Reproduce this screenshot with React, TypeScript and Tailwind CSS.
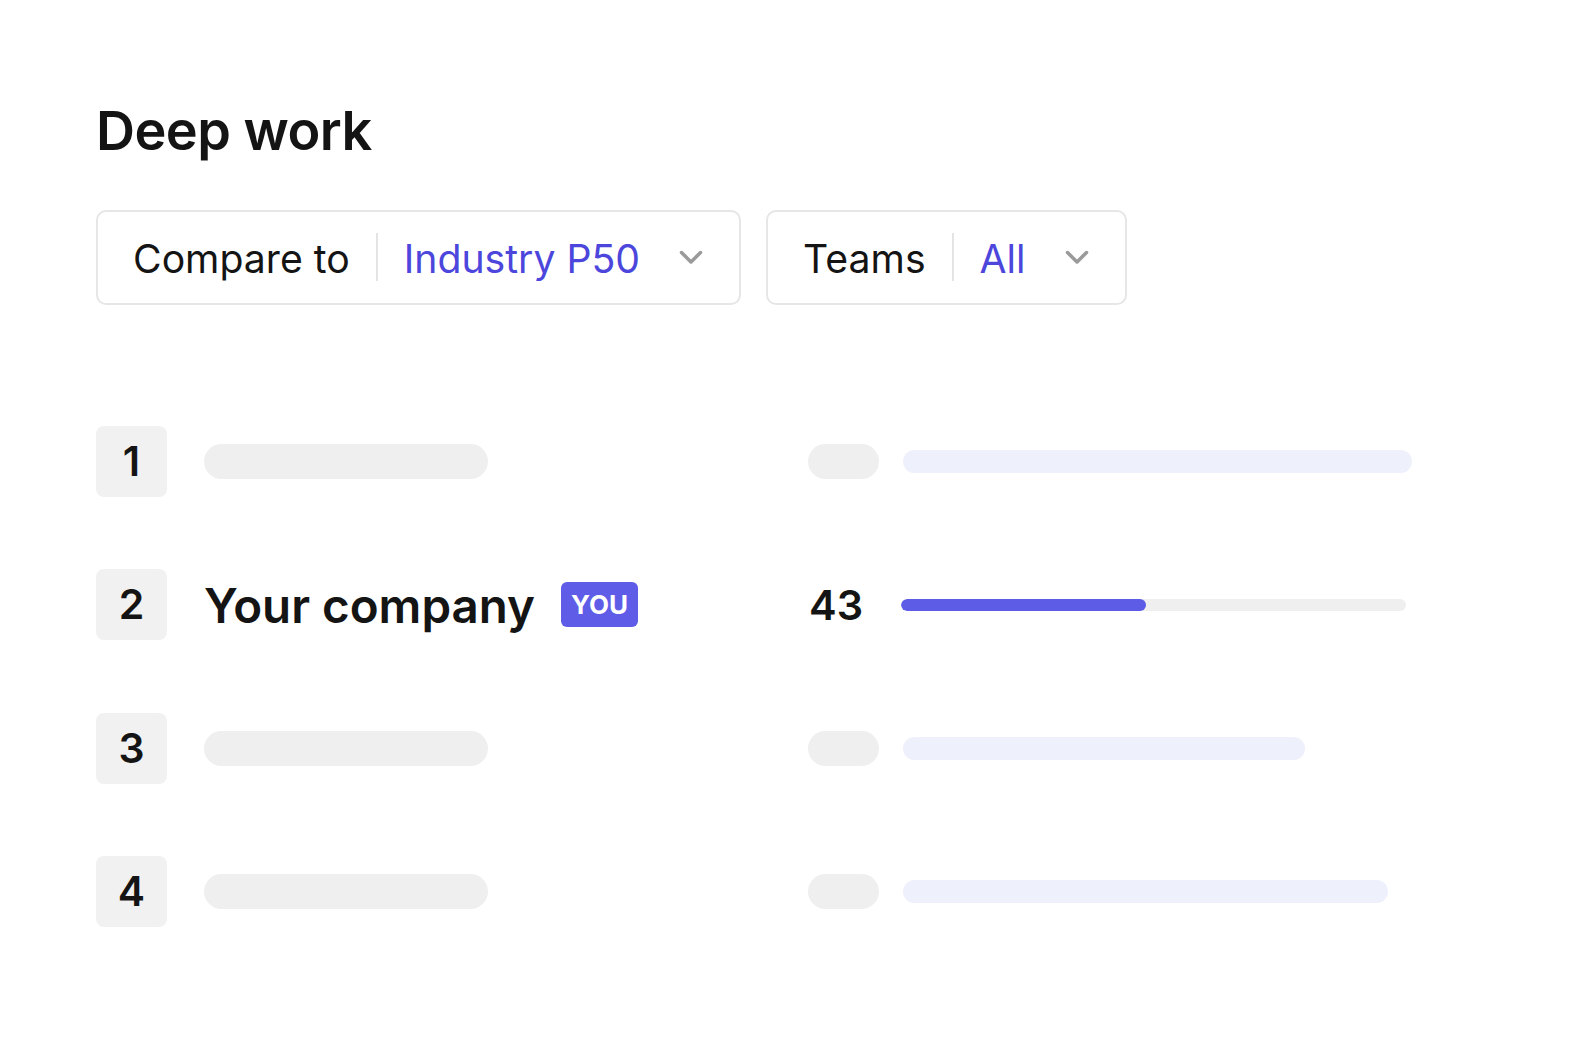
import React from "react"

const font = { fontFamily: "Inter, 'Noto Sans', sans-serif" }

function Chevron() {
  return (
    <svg width="24" height="15" viewBox="0 0 24 15" fill="none" className="shrink-0">
      <polyline points="2.5,2.5 12,12 21.5,2.5" stroke="#9a9a9a" strokeWidth="3.5" strokeLinecap="round" strokeLinejoin="round" />
    </svg>
  )
}

function Select({ label, value }: { label: string; value: string }) {
  return (
    <div className="flex items-center h-[95px] border-2 border-[#e6e6e6] rounded-[10px] pl-[35px] pr-[36px] pt-[3px] bg-white">
      <span className="text-[39.2px] text-[#141414] leading-none">{label}</span>
      <span className="w-[2px] h-[48px] bg-[#e4e4e4] mx-[26px] -mt-[3px]" />
      <span className="text-[39.2px] text-[#4c46dc] leading-none">{value}</span>
      <span className="ml-[39px] -mt-[3px]"><Chevron /></span>
    </div>
  )
}

function RankBox({ n }: { n: number }) {
  return (
    <div className="w-[71px] h-[71px] rounded-[8px] bg-[#f1f1f1] flex items-center justify-center text-[41px] font-semibold text-[#141414] shrink-0">
      {n}
    </div>
  )
}

function SkeletonRow({ n, barWidth }: { n: number; barWidth: number }) {
  return (
    <div className="flex items-center h-[71px]">
      <div className="flex items-center w-[712px] shrink-0">
        <RankBox n={n} />
        <div className="ml-[37px] w-[284px] h-[35px] rounded-full bg-[#efefef]" />
      </div>
      <div className="w-[71px] h-[35px] rounded-full bg-[#efefef]" />
      <div className="ml-[24px] h-[23px] rounded-full bg-[#eef1fc]" style={{ width: barWidth }} />
    </div>
  )
}

export default function App() {
  return (
    <div className="min-h-screen bg-white" style={font}>
      <div className="pl-[96px] pt-[99px]">
        <h1 className="text-[54px] font-semibold text-[#141414] leading-[1.2] tracking-[-0.01em]">Deep work</h1>

        <div className="flex gap-[25px] mt-[46px]">
          <Select label="Compare to" value="Industry P50" />
          <Select label="Teams" value="All" />
        </div>

        <div className="flex flex-col gap-[72.5px] mt-[121px]">
          <SkeletonRow n={1} barWidth={509} />

          <div className="flex items-center h-[71px]">
            <div className="flex items-center w-[712px] shrink-0">
              <RankBox n={2} />
              <span className="ml-[37px] text-[47.5px] font-semibold text-[#141414] leading-none pt-[2px]">Your company</span>
              <span className="ml-[26px] h-[45px] px-[10px] rounded-[6px] bg-[#5f5ce8] text-white text-[26px] font-bold flex items-center leading-none">
                YOU
              </span>
            </div>
            <span className="w-[93px] text-[41.5px] font-semibold text-[#141414] leading-none pl-[1px] pt-[2px]">43</span>
            <div className="w-[505px] h-[12px] rounded-full bg-[#efefef] overflow-hidden">
              <div className="h-full rounded-full bg-[#5c5ce6]" style={{ width: 245 }} />
            </div>
          </div>

          <SkeletonRow n={3} barWidth={402} />
          <SkeletonRow n={4} barWidth={485} />
        </div>
      </div>
    </div>
  )
}
